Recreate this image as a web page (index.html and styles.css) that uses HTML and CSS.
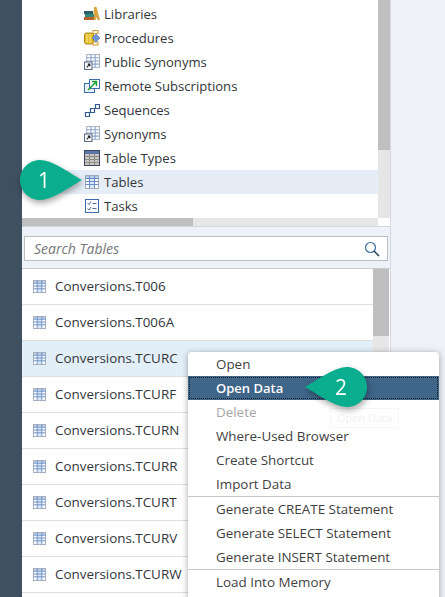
FILE: index.html
```html
<!DOCTYPE html>
<html lang="en">
<head>
    <meta charset="UTF-8">
    <meta name="viewport" content="width=device-width, initial-scale=1.0">
    <title>Database Explorer</title>
    <link rel="stylesheet" href="styles.css">
</head>
<body>
    <svg class="defs" width="0" height="0">
        <symbol id="table" viewBox="0 0 14 14">
            <rect x="0.5" y="0.5" width="13" height="13" fill="#fff" stroke="#a3abb8"/>
            <rect x="1" y="1" width="12" height="2" fill="#b9cbe6"/>
            <rect x="5" y="4" width="4" height="9" fill="#d8e6f7"/>
            <path d="M0.5 3.5h13M0.5 6.5h13M0.5 9.5h13M4.5 0.5v13M9.5 0.5v13" fill="none" stroke="#6a8ec4"/>
        </symbol>
        <symbol id="synonym" viewBox="0 0 15 15">
            <rect x="2.5" y="0.5" width="12" height="12" fill="#fff" stroke="#a9b5c8"/>
            <path d="M2.5 3.5h12M2.5 6.5h12M2.5 9.5h12M6.5 0.5v12M10.5 0.5v12" fill="none" stroke="#8ea6cb"/>
            <rect x="0.5" y="7.5" width="7" height="7" fill="#fff" stroke="#5d6f8c"/>
            <path d="M2.5 12.5l3-3M3.5 9.5h2v2" fill="none" stroke="#222"/>
        </symbol>
    </svg>

    <div class="app">
        <div class="rail"></div>
        <div class="explorer">
            <div class="tree">
                <ul class="tree-list">
                    <li class="tree-row">
                        <svg class="tree-icon" viewBox="0 0 16 16">
                            <path d="M10 1h2.500L16 14h-2.500l-1-3-1 3H9z" fill="#d9a441"/>
                            <rect x="0" y="11" width="10" height="3" fill="#b5612d"/>
                            <rect x="1" y="8" width="9" height="3" fill="#2f8a7a"/>
                            <rect x="0" y="5" width="9" height="3" fill="#2e5f66"/>
                        </svg>
                        <span>Libraries</span>
                    </li>
                    <li class="tree-row">
                        <svg class="tree-icon" viewBox="0 0 16 16">
                            <rect x="0.500" y="3" width="9" height="11" rx="2" fill="#e6c02c" stroke="#a8861a"/>
                            <path d="M3 4v9M6 4v9" stroke="#f6e58a"/>
                            <rect x="9" y="0.500" width="5" height="3" fill="#fff" stroke="#d19a2c"/>
                            <rect x="9" y="12" width="5" height="3" fill="#fff" stroke="#d19a2c"/>
                            <path d="M12 4l4 4-4 4-4-4z" fill="#6f96d8" stroke="#3f67a8" stroke-width="0.500"/>
                        </svg>
                        <span>Procedures</span>
                    </li>
                    <li class="tree-row">
                        <svg class="tree-icon"><use href="#synonym"/></svg>
                        <span>Public Synonyms</span>
                    </li>
                    <li class="tree-row">
                        <svg class="tree-icon" viewBox="0 0 16 16">
                            <rect x="0.500" y="5.500" width="10" height="9" fill="#e8f0fa" stroke="#3f6cae"/>
                            <rect x="5.500" y="1.500" width="10" height="9" fill="#fff" stroke="#3f6cae"/>
                            <path d="M4 12l8-8M8 3.500h4.500V8" fill="none" stroke="#18a030" stroke-width="1.500"/>
                        </svg>
                        <span>Remote Subscriptions</span>
                    </li>
                    <li class="tree-row">
                        <svg class="tree-icon" viewBox="0 0 16 16">
                            <path d="M1.500 10.500h4v4h-4zM6.500 6.500h4v4h-4zM11.500 2.500h4v4h-4z" fill="#fff" stroke="#34598f" stroke-width="1.200"/>
                        </svg>
                        <span>Sequences</span>
                    </li>
                    <li class="tree-row">
                        <svg class="tree-icon"><use href="#synonym"/></svg>
                        <span>Synonyms</span>
                    </li>
                    <li class="tree-row">
                        <svg class="tree-icon" viewBox="0 0 16 16">
                            <rect x="0.500" y="0.500" width="15" height="15" fill="#c9c5c0" stroke="#3c4560"/>
                            <rect x="1" y="1" width="14" height="3" fill="#5d78a8"/>
                            <path d="M1 6.500h14M1 9.500h14M1 12.500h14M5.500 4v11M10.500 4v11" stroke="#8f8b88"/>
                        </svg>
                        <span>Table Types</span>
                    </li>
                    <li class="tree-row tree-row-selected">
                        <svg class="tree-icon tree-icon-table"><use href="#table"/></svg>
                        <span>Tables</span>
                    </li>
                    <li class="tree-row">
                        <svg class="tree-icon" viewBox="0 0 16 16">
                            <rect x="1.500" y="1.500" width="13" height="13" fill="#fff" stroke="#3f6cae"/>
                            <path d="M3.500 5l1.500 1.500L7 3.500M3.500 10.500L5 12l2-3" fill="none" stroke="#4f6f9f"/>
                            <path d="M8.500 5.500h4M8.500 10.500h4" stroke="#4f6f9f"/>
                        </svg>
                        <span>Tasks</span>
                    </li>
                </ul>
                <div class="vscroll tree-vscroll"><div class="thumb tree-vthumb"></div></div>
                <div class="hscroll"><div class="thumb hthumb"></div></div>
                <div class="scroll-corner"></div>
            </div>

            <div class="search-bar">
                <div class="search-box">
                    <span class="search-text">Search Tables</span>
                    <svg class="search-icon" viewBox="0 0 16 16">
                        <circle cx="6.500" cy="6.500" r="5" fill="none" stroke="#3d6f9e" stroke-width="1.200"/>
                        <path d="M10 10l5 5" stroke="#2a3f55" stroke-width="1.500"/>
                    </svg>
                </div>
            </div>

            <div class="results">
                <ul class="result-list">
                    <li class="result-row"><svg class="result-icon"><use href="#table"/></svg>Conversions.T006</li>
                    <li class="result-row"><svg class="result-icon"><use href="#table"/></svg>Conversions.T006A</li>
                    <li class="result-row result-row-hover"><svg class="result-icon"><use href="#table"/></svg>Conversions.TCURC</li>
                    <li class="result-row"><svg class="result-icon"><use href="#table"/></svg>Conversions.TCURF</li>
                    <li class="result-row"><svg class="result-icon"><use href="#table"/></svg>Conversions.TCURN</li>
                    <li class="result-row"><svg class="result-icon"><use href="#table"/></svg>Conversions.TCURR</li>
                    <li class="result-row"><svg class="result-icon"><use href="#table"/></svg>Conversions.TCURT</li>
                    <li class="result-row"><svg class="result-icon"><use href="#table"/></svg>Conversions.TCURV</li>
                    <li class="result-row"><svg class="result-icon"><use href="#table"/></svg>Conversions.TCURW</li>
                </ul>
                <div class="vscroll results-vscroll"><div class="thumb results-vthumb"></div></div>
            </div>
        </div>
        <div class="backdrop"></div>
    </div>

    <div class="menu">
        <div class="menu-group">
            <div class="menu-item">Open</div>
            <div class="menu-item menu-item-active">Open Data</div>
            <div class="menu-item menu-item-disabled">Delete</div>
            <div class="menu-item">Where-Used Browser</div>
            <div class="menu-item">Create Shortcut</div>
            <div class="menu-item">Import Data</div>
        </div>
        <div class="menu-group">
            <div class="menu-item">Generate CREATE Statement</div>
            <div class="menu-item">Generate SELECT Statement</div>
            <div class="menu-item">Generate INSERT Statement</div>
        </div>
        <div class="menu-group">
            <div class="menu-item">Load Into Memory</div>
        </div>
    </div>
    <div class="ghost-tip">Open Data</div>

    <div class="callout callout-one">
        <svg class="callout-shape" viewBox="0 0 62 40">
            <path d="M20 0C32 0 48 12 62 20C48 28 32 40 20 40C9 40 0 31 0 20S9 0 20 0z" fill="#0aad8d"/>
        </svg>
        <span class="callout-num">1</span>
    </div>
    <div class="callout callout-two">
        <svg class="callout-shape" viewBox="0 0 62 40">
            <path d="M42 0C30 0 14 12 0 20C14 28 30 40 42 40C53 40 62 31 62 20S53 0 42 0z" fill="#0aad8d"/>
        </svg>
        <span class="callout-num">2</span>
    </div>
</body>
</html>
```

FILE: styles.css
```css
html, body { margin: 0; padding: 0; }
body { width: 445px; height: 597px; overflow: hidden; position: relative; background: #eef1f7; font-family: "Open Sans", "Noto Sans", sans-serif; color: #32363a; }
ul { list-style: none; margin: 0; padding: 0; }
.defs { position: absolute; }

.app { display: flex; height: 597px; }
.rail { width: 22px; background: #3f5161; }
.explorer { width: 368px; display: flex; flex-direction: column; border-right: 1px solid #d5d8dd; box-sizing: content-box; }
.backdrop { flex: 1; background: #eef1f7; }

.tree { height: 226px; display: grid; grid-template-columns: 356px 12px; grid-template-rows: 218px 8px; background: #fff; }
.tree-list { padding-top: 2px; overflow: hidden; }
.tree-row { height: 24px; display: flex; align-items: center; padding-left: 62px; gap: 4px; font-size: 13.1px; }
.tree-row-selected { background: #e7edf6; }
.tree-icon { width: 16px; height: 16px; flex: none; }
.tree-icon-table { width: 14px; height: 14px; margin: 0 1px; }

.vscroll { background: #e6e6e6; }
.thumb { background: #bfbfbf; }
.tree-vthumb { height: 150px; }
.hscroll { background: #e6e6e6; }
.hthumb { width: 171px; height: 8px; }
.scroll-corner { background: #fff; }

.search-bar { height: 43px; box-sizing: border-box; padding: 9px 2px 0 2px; background: #eef1f7; border-top: 1px solid #d5d8dd; border-bottom: 1px solid #c8ccd2; }
.search-box { height: 25px; box-sizing: border-box; display: flex; align-items: center; justify-content: space-between; padding: 0 7px 0 9px; background: #fff; border: 1px solid #b9bec4; }
.search-text { font-size: 14px; font-style: italic; color: #74777a; }
.search-icon { width: 16px; height: 16px; }

.results { flex: 1; display: flex; min-height: 0; background: #fff; }
.result-list { width: 351px; overflow: hidden; }
.result-row { height: 36px; box-sizing: border-box; display: flex; align-items: center; gap: 9px; padding: 0 0 2px 11px; font-size: 13.4px; border-bottom: 1px solid #dedede; }
.result-row-hover { background: #e3eff8; }
.result-icon { width: 13px; height: 13px; flex: none; margin-top: 2px; }
.results-vscroll { width: 16px; }
.results-vthumb { height: 67px; }

.menu { position: absolute; left: 188px; top: 352px; width: 251px; height: 260px; background: #fff; border-radius: 4px 4px 0 0; box-shadow: 0 1px 6px rgba(0, 0, 0, 0.35); font-size: 13.4px; }
.menu-group { border-bottom: 1px solid #c8c8c8; }
.menu-group:last-child { border-bottom: 0; }
.menu-item { height: 24px; line-height: 24px; padding-left: 28px; color: #3f3f3f; }
.menu-item-active { background: #3f6689; color: #fff; font-size: 13px; font-weight: 600; outline: 1px dotted #10202c; outline-offset: -2px; }
.menu-item-disabled { color: #a6a6a6; }

.ghost-tip { position: absolute; left: 330px; top: 408px; width: 69px; height: 20px; box-sizing: border-box; border: 1px solid #f6f6f6; font-size: 11px; line-height: 18px; text-align: center; color: #f1f1f1; }

.callout { position: absolute; width: 62px; height: 40px; display: flex; align-items: center; color: #fff; font-size: 21px; filter: drop-shadow(1px 3px 3px rgba(0, 0, 0, 0.35)); }
.callout-shape { position: absolute; left: 0; top: 0; width: 62px; height: 40px; }
.callout-num { position: relative; }
.callout-one { left: 20px; top: 160px; }
.callout-one .callout-num { margin-left: 18px; }
.callout-two { left: 305px; top: 367px; }
.callout-two .callout-num { margin-left: 30px; }
```
